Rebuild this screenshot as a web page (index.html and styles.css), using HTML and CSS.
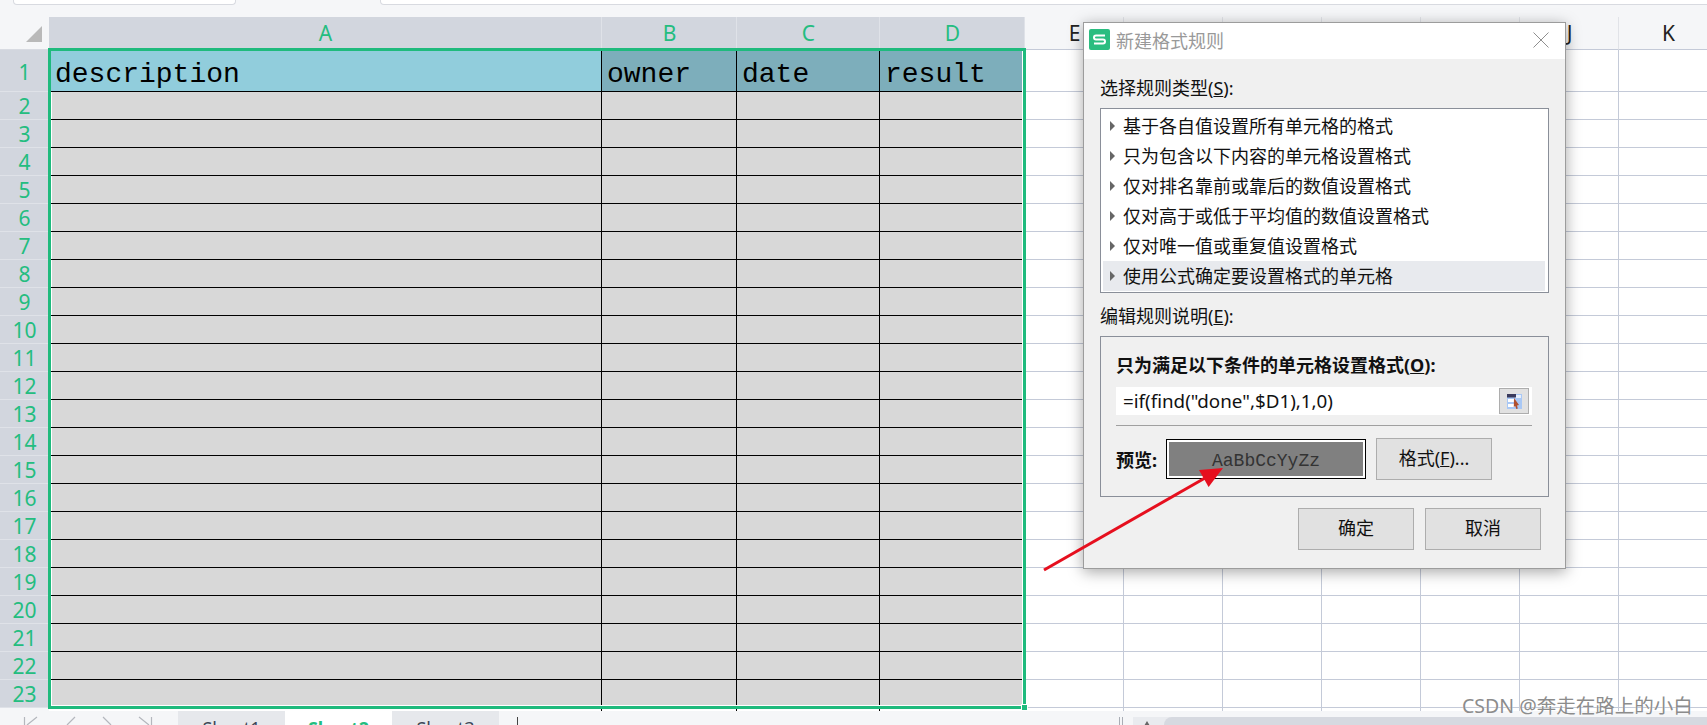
FILE: index.html
```html
<!DOCTYPE html>
<html lang="zh-CN">
<head>
  <meta charset="UTF-8" />
  <title>新建格式规则</title>
  <link rel="stylesheet" href="styles.css">
</head>
<body>
  <div class="app">
    <div class="topbar">
      <div class="name-box"></div>
      <div class="formula-box"></div>
    </div>

    <div class="col-head">
      <div class="corner"><span class="corner-mark"></span></div>
      <div class="col on">A</div>
      <div class="col on">B</div>
      <div class="col on">C</div>
      <div class="col on">D</div>
      <div class="col">E</div>
      <div class="col">F</div>
      <div class="col">G</div>
      <div class="col">H</div>
      <div class="col">I</div>
      <div class="col">J</div>
      <div class="col">K</div>
    </div>

    <div class="row row-first">
      <div class="rh">1</div>
      <div class="cell title-a">description</div>
      <div class="cell title">owner</div>
      <div class="cell title">date</div>
      <div class="cell title">result</div>
      <div class="blank"></div>
    </div>
    <div class="row"><div class="rh">2</div><div class="cell"></div><div class="cell"></div><div class="cell"></div><div class="cell"></div><div class="blank"></div></div>
    <div class="row"><div class="rh">3</div><div class="cell"></div><div class="cell"></div><div class="cell"></div><div class="cell"></div><div class="blank"></div></div>
    <div class="row"><div class="rh">4</div><div class="cell"></div><div class="cell"></div><div class="cell"></div><div class="cell"></div><div class="blank"></div></div>
    <div class="row"><div class="rh">5</div><div class="cell"></div><div class="cell"></div><div class="cell"></div><div class="cell"></div><div class="blank"></div></div>
    <div class="row"><div class="rh">6</div><div class="cell"></div><div class="cell"></div><div class="cell"></div><div class="cell"></div><div class="blank"></div></div>
    <div class="row"><div class="rh">7</div><div class="cell"></div><div class="cell"></div><div class="cell"></div><div class="cell"></div><div class="blank"></div></div>
    <div class="row"><div class="rh">8</div><div class="cell"></div><div class="cell"></div><div class="cell"></div><div class="cell"></div><div class="blank"></div></div>
    <div class="row"><div class="rh">9</div><div class="cell"></div><div class="cell"></div><div class="cell"></div><div class="cell"></div><div class="blank"></div></div>
    <div class="row"><div class="rh">10</div><div class="cell"></div><div class="cell"></div><div class="cell"></div><div class="cell"></div><div class="blank"></div></div>
    <div class="row"><div class="rh">11</div><div class="cell"></div><div class="cell"></div><div class="cell"></div><div class="cell"></div><div class="blank"></div></div>
    <div class="row"><div class="rh">12</div><div class="cell"></div><div class="cell"></div><div class="cell"></div><div class="cell"></div><div class="blank"></div></div>
    <div class="row"><div class="rh">13</div><div class="cell"></div><div class="cell"></div><div class="cell"></div><div class="cell"></div><div class="blank"></div></div>
    <div class="row"><div class="rh">14</div><div class="cell"></div><div class="cell"></div><div class="cell"></div><div class="cell"></div><div class="blank"></div></div>
    <div class="row"><div class="rh">15</div><div class="cell"></div><div class="cell"></div><div class="cell"></div><div class="cell"></div><div class="blank"></div></div>
    <div class="row"><div class="rh">16</div><div class="cell"></div><div class="cell"></div><div class="cell"></div><div class="cell"></div><div class="blank"></div></div>
    <div class="row"><div class="rh">17</div><div class="cell"></div><div class="cell"></div><div class="cell"></div><div class="cell"></div><div class="blank"></div></div>
    <div class="row"><div class="rh">18</div><div class="cell"></div><div class="cell"></div><div class="cell"></div><div class="cell"></div><div class="blank"></div></div>
    <div class="row"><div class="rh">19</div><div class="cell"></div><div class="cell"></div><div class="cell"></div><div class="cell"></div><div class="blank"></div></div>
    <div class="row"><div class="rh">20</div><div class="cell"></div><div class="cell"></div><div class="cell"></div><div class="cell"></div><div class="blank"></div></div>
    <div class="row"><div class="rh">21</div><div class="cell"></div><div class="cell"></div><div class="cell"></div><div class="cell"></div><div class="blank"></div></div>
    <div class="row"><div class="rh">22</div><div class="cell"></div><div class="cell"></div><div class="cell"></div><div class="cell"></div><div class="blank"></div></div>
    <div class="row"><div class="rh">23</div><div class="cell"></div><div class="cell"></div><div class="cell"></div><div class="cell"></div><div class="blank"></div></div>
    <div class="row row-tail"><div class="rh-tail"></div><div class="tail"></div><div class="tail"></div><div class="tail"></div><div class="tail"></div><div class="blank"></div></div>

    <div class="sheetbar">
      <div class="nav">
        <svg width="178" height="14" viewBox="0 0 178 14">
          <path d="M24.500 6v8M37 6l-10 8M75 6l-8 8M103 6l8 8M139 6l10 8M151.500 6v8" fill="none" stroke="#b4b7bd" stroke-width="1.2"/>
        </svg>
      </div>
      <div class="tab">Sheet1</div>
      <div class="tab tab-on">Sheet2</div>
      <div class="tab">Sheet3</div>
      <div class="tab-add"></div>
      <div class="split"></div>
      <div class="scroll">
        <span class="scroll-arrow"></span>
        <div class="thumb"></div>
      </div>
    </div>

    <!-- selected range A1:D23 -->
    <div class="selection"><span class="handle"></span></div>

    <div class="dialog">
      <div class="dlg-title">
        <span class="logo">
          <svg width="21" height="21" viewBox="0 0 21 21">
            <rect width="21" height="21" rx="2" fill="#2bbd80"/>
            <path d="M16 6.500H7a2 2 0 0 0 0 4h7a2 2 0 0 1 0 4H5" fill="none" stroke="#fff" stroke-width="2"/>
          </svg>
        </span>
        <span class="dlg-name">新建格式规则</span>
        <svg class="close" width="16" height="16" viewBox="0 0 16 16">
          <path d="M.5.5l15 15M15.500.5l-15 15" stroke="#8f8f8f" stroke-width="1" fill="none"/>
        </svg>
      </div>
      <div class="dlg-body">
        <div class="label">选择规则类型(<u>S</u>):</div>
        <div class="list">
          <div class="item"><span class="tri"></span>基于各自值设置所有单元格的格式</div>
          <div class="item"><span class="tri"></span>只为包含以下内容的单元格设置格式</div>
          <div class="item"><span class="tri"></span>仅对排名靠前或靠后的数值设置格式</div>
          <div class="item"><span class="tri"></span>仅对高于或低于平均值的数值设置格式</div>
          <div class="item"><span class="tri"></span>仅对唯一值或重复值设置格式</div>
          <div class="item item-on"><span class="tri"></span>使用公式确定要设置格式的单元格</div>
        </div>
        <div class="label label-edit">编辑规则说明(<u>E</u>):</div>
        <div class="group">
          <div class="group-title">只为满足以下条件的单元格设置格式(<u>O</u>):</div>
          <div class="formula">
            <span class="formula-text">=if(find("done",$D1),1,0)</span>
            <span class="pick">
              <svg width="15" height="15" viewBox="0 0 15 15">
                <rect width="15" height="15" fill="#a9c8f5"/>
                <rect x="1" y="5" width="7" height="3" fill="#fff"/>
                <rect x="1" y="10" width="7" height="3" fill="#fff"/>
                <rect x="8" y="1" width="6" height="3" fill="#e6effc"/>
                <rect width="9" height="3.500" fill="#3a3a5c"/>
                <path d="M7 4l5 7-2 .5.8 3-1.500.5-1-3-1.500 1z" fill="#b0502e"/>
              </svg>
            </span>
          </div>
          <div class="rule"></div>
          <div class="preview-row">
            <div class="preview-label">预览:</div>
            <div class="preview">AaBbCcYyZz</div>
            <div class="btn btn-format">格式(<u>F</u>)...</div>
          </div>
        </div>
        <div class="dlg-foot">
          <div class="btn">确定</div>
          <div class="btn">取消</div>
        </div>
      </div>
    </div>

    <!-- annotation drawn on top of the screenshot -->
    <svg class="arrow" width="190" height="115" viewBox="0 0 190 115">
      <path d="M4 110L165 18" stroke="#e60f1e" stroke-width="3" fill="none"/>
      <path d="M183 8L159 10l9.600 17z" fill="#e60f1e"/>
    </svg>

    <div class="watermark">CSDN @奔走在路上的小白</div>
  </div>
</body>
</html>
```

FILE: styles.css
```css
* {
  box-sizing: border-box;
}
body {
  margin: 0;
  background: #f5f6f8;
  font-family: "Noto Sans", "Noto Sans CJK SC", sans-serif;
}
.app {
  position: relative;
  width: 1707px;
  height: 725px;
  overflow: hidden;
}

/* top strip */
.topbar {
  display: flex;
  height: 17px;
  padding-left: 13px;
}
.name-box,
.formula-box {
  height: 5px;
  background: #fff;
  border: 1px solid #d8dae0;
  border-top: none;
  border-radius: 0 0 4px 4px;
}
.name-box {
  width: 223px;
}
.formula-box {
  flex: 1;
  margin-left: 144px;
  margin-right: -4px;
}

/* column letters */
.col-head {
  display: grid;
  grid-template-columns: 49px 553px 135px 143px 145px repeat(7, 99px);
  height: 33px;
}
.corner {
  position: relative;
  border-bottom: 1px solid #d8dbe2;
}
.corner-mark {
  position: absolute;
  left: 26px;
  top: 9px;
  border-left: 16px solid transparent;
  border-bottom: 16px solid #b9b9b9;
}
.col {
  padding-left: 1px;
  text-align: center;
  font-size: 21px;
  line-height: 32px;
  color: #222;
  border-right: 1px solid #e1e3e8;
  border-bottom: 1px solid #c4cad8;
}
.col.on {
  background: #d2d6de;
  color: #24bd80;
  border-right-color: #dfe2e8;
  border-bottom-color: #d2d6de;
}

/* rows */
.row {
  display: grid;
  grid-template-columns: 49px 553px 135px 143px 145px 1fr;
  height: 28px;
  background: #fff;
}
.row-first {
  height: 42px;
}
.row-tail {
  height: 3px;
}
.rh {
  background: #d2d6de;
  color: #24bd80;
  font-size: 21px;
  line-height: 28px;
  text-align: center;
  border-bottom: 1px solid #dfe2e8;
  overflow: hidden;
}
.row-first .rh {
  line-height: 44px;
}
.rh-tail {
  background: #f5f6f8;
}
.cell {
  background: #d8d8d8;
  border-right: 1px solid #000;
  border-bottom: 1px solid #000;
}
/* white strip just inside the selection frame, the grid lines run over it */
.rh + .cell {
  background: linear-gradient(to right, #fff 3px, #d8d8d8 3px);
}
.tail {
  border-right: 1px solid #000;
}
.title,
.title-a {
  font-family: "Liberation Mono", monospace;
  font-size: 28px;
  line-height: 50px;
  padding-left: 5px;
  color: #000;
  overflow: hidden;
}
.title {
  background: #7daebb;
}
.rh + .title-a {
  background: #91cddc;
  padding-left: 6px;
}
.blank {
  background: repeating-linear-gradient(to right, transparent 0 98px, #c4cad8 98px 99px);
  border-bottom: 1px solid #c4cad8;
}
.row-tail .blank {
  border-bottom: none;
}

/* selection frame */
.selection {
  position: absolute;
  left: 48px;
  top: 48px;
  width: 978px;
  height: 661px;
  border: 3px solid #1fba7d;
  box-shadow: inset -1px 0 #fff, inset 0 -1px #fff;
  pointer-events: none;
}
.handle {
  position: absolute;
  right: -5px;
  bottom: -5px;
  width: 7px;
  height: 7px;
  background: #1fba7d;
  border: 1px solid #fff;
}

/* sheet tabs */
.sheetbar {
  display: flex;
  height: 14px;
  overflow: hidden;
  background: #f5f6f8;
}
.nav {
  width: 178px;
}
.nav svg {
  display: block;
}
.tab {
  width: 107px;
  padding-top: 4px;
  background: #e6e8ec;
  color: #3d4757;
  font-size: 18px;
  line-height: 26px;
  text-align: center;
}
.tab-on {
  background: #fff;
  color: #24bd80;
  font-weight: bold;
}
.tab-add {
  width: 1px;
  height: 8px;
  margin: 6px 0 0 18px;
  background: #444;
}
.split {
  width: 4px;
  height: 8px;
  margin: 6px 0 0 601px;
  border-left: 1px solid #a9adb5;
  border-right: 1px solid #a9adb5;
}
.scroll {
  flex: 1;
  display: flex;
  margin: 6px 0 0 10px;
  padding-left: 31px;
  background: #e9ebef;
  position: relative;
}
.scroll-arrow {
  position: absolute;
  left: 11px;
  top: 4px;
  border-left: 3px solid transparent;
  border-right: 3px solid transparent;
  border-bottom: 5px solid #666;
}
.thumb {
  flex: 1;
  background: #d6d9e0;
  border-radius: 9px 0 0 0;
}

/* dialog */
.dialog {
  position: absolute;
  left: 1083px;
  top: 22px;
  width: 483px;
  height: 547px;
  background: #f0f0f0;
  border: 1px solid #9c9c9c;
  box-shadow: 0 3px 14px rgba(0, 0, 0, 0.35);
  color: #111;
  font-size: 18px;
}
.dlg-title {
  display: flex;
  align-items: center;
  height: 36px;
  padding: 0 16px 3px 5px;
  background: #fff;
}
.logo {
  display: flex;
  margin-right: 6px;
}
.dlg-name {
  flex: 1;
  color: #999;
}
.dlg-body {
  padding: 16px 16px 0;
}
.label {
  height: 26px;
  line-height: 26px;
}
.list {
  height: 185px;
  margin-top: 7px;
  padding: 2px 3px 2px 2px;
  background: #fff;
  border: 1px solid #8a8f99;
}
.item {
  display: flex;
  align-items: center;
  height: 30px;
  padding-left: 7px;
  line-height: 30px;
  white-space: nowrap;
}
.item-on {
  background: #e8eaee;
}
.tri {
  width: 0;
  margin-right: 8px;
  border-left: 5px solid #666;
  border-top: 5px solid transparent;
  border-bottom: 5px solid transparent;
}
.label-edit {
  margin-top: 10px;
}
.group {
  height: 161px;
  margin-top: 7px;
  padding: 15px 16px 0 15px;
  border: 1px solid #8a8f99;
}
.group-title {
  height: 26px;
  line-height: 26px;
  font-weight: bold;
}
.formula {
  display: flex;
  align-items: center;
  justify-content: space-between;
  height: 28px;
  margin-top: 9px;
  padding: 0 3px 0 7px;
  background: #fff;
  font-size: 18.8px;
}
.pick {
  display: flex;
  align-items: center;
  justify-content: center;
  width: 30px;
  height: 26px;
  background: #e1e1e1;
  border: 1px solid #adadad;
}
.rule {
  height: 1px;
  margin-top: 10px;
  background: #a0a0a0;
}
.preview-row {
  display: flex;
  align-items: center;
  height: 42px;
  margin-top: 12px;
}
.preview-label {
  width: 50px;
  font-weight: bold;
}
.preview {
  width: 200px;
  height: 40px;
  background: #808080;
  border: 1px solid #000;
  box-shadow: inset 0 0 0 2px #fff;
  color: #333;
  font-family: "Liberation Mono", monospace;
  font-size: 18px;
  line-height: 42px;
  text-align: center;
}
.btn {
  width: 116px;
  height: 42px;
  background: #e1e1e1;
  border: 1px solid #adadad;
  line-height: 38px;
  text-align: center;
}
.btn-format {
  margin-left: 10px;
}
.dlg-foot {
  display: flex;
  justify-content: flex-end;
  gap: 11px;
  margin-top: 11px;
  padding-right: 8px;
}

/* annotation */
.arrow {
  position: absolute;
  left: 1040px;
  top: 460px;
}
.watermark {
  position: absolute;
  left: 1462px;
  top: 693px;
  color: #8c8c8c;
  font-size: 19.5px;
  line-height: 26px;
  white-space: nowrap;
  text-shadow: 0 0 1px #fff;
}
```
